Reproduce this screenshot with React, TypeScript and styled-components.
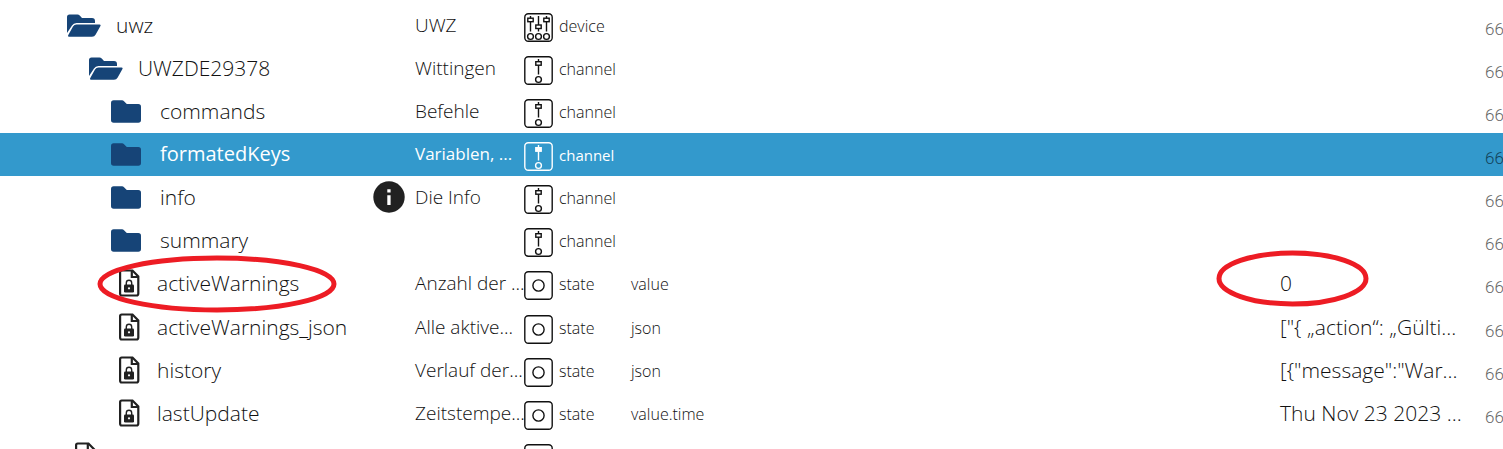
import React from "react";
import styled, { createGlobalStyle, css } from "styled-components";

const Global = createGlobalStyle`
  *, *::before, *::after { box-sizing: border-box; }
  body {
    margin: 0;
    background: #fff;
    color: #111;
    font-family: "Open Sans", "Noto Sans", sans-serif;
    font-weight: 300;
  }
`;

const Page = styled.main`
  height: 100vh;
  overflow: hidden;
  padding-top: 4px;
`;

const Table = styled.table`
  width: 100%;
  table-layout: fixed;
  border-collapse: separate;
  border-spacing: 0;
`;

const Col = styled.col<{ $width?: number }>`
  ${({ $width }) => $width && css`width: ${$width}px;`}
`;

const Cell = styled.td`
  position: relative;
  padding: 0;
  height: 43px;
  vertical-align: middle;
  white-space: nowrap;
  line-height: 28px;
`;

const Group = styled.tbody<{ $divided?: boolean }>`
  ${({ $divided }) =>
    $divided &&
    css`
      tr:first-child ${Cell} {
        height: 44px;
        border-bottom: 1px solid transparent;
      }
    `}
`;

const NameBox = styled.div<{ $level: number }>`
  display: flex;
  align-items: center;
  height: 43px;
  padding-left: ${({ $level }) => 67 + $level * 22}px;
  padding-right: 10px;
  padding-bottom: 1px;
  font-size: 21px;
`;

const IconSlot = styled.span<{ $file?: boolean }>`
  display: flex;
  flex: none;
  width: ${({ $file }) => ($file ? 46 : 49)}px;
  padding-left: ${({ $file }) => ($file ? 8 : 0)}px;
  color: ${({ $file }) => ($file ? "#212121" : "#164477")};
`;

const InfoMark = styled.span`
  display: flex;
  margin-left: auto;
`;

const Label = styled.div`
  padding-bottom: 1px;
  font-size: 19px;
`;

const TypeBox = styled.div`
  display: flex;
  align-items: center;
  gap: 6px;
  height: 43px;
  font-size: 16px;

  svg {
    flex: none;
    margin-top: 4px;
  }
`;

const Role = styled.div`
  font-size: 16px;
`;

const Value = styled.div`
  padding-bottom: 1px;
  font-size: 21px;
`;

const Row = styled.tr<{ $selected?: boolean }>`
  height: 43px;
  ${({ $selected }) =>
    $selected &&
    css`
      background: #3399cc;
      color: #fff;
      font-weight: 500;

      ${NameBox} { font-size: 20px; }
      ${Label} { font-size: 17px; }
      ${TypeBox} { font-size: 15px; }
    `}
`;

const Rights = styled.div<{ $selected?: boolean }>`
  overflow: hidden;
  padding-top: 7px;
  color: ${({ $selected }) => ($selected ? "#12425a" : "#666")};
  font-family: Roboto, sans-serif;
  font-size: 17px;
  font-weight: 300;
`;

const Ring = styled.svg<{ $left: number; $top: number }>`
  position: absolute;
  left: ${({ $left }) => $left}px;
  top: ${({ $top }) => $top}px;
  z-index: 1;
  pointer-events: none;
`;

const Marker = ({ left, top, width, height }: { left: number; top: number; width: number; height: number }) => (
  <Ring $left={left} $top={top} width={width} height={height} aria-hidden="true">
    <ellipse
      cx={width / 2}
      cy={height / 2}
      rx={width / 2 - 3}
      ry={height / 2 - 3}
      fill="none"
      stroke="#ed1c24"
      strokeWidth="5"
    />
  </Ring>
);

const FolderOpen = () => (
  <svg width="34" height="23" viewBox="0 0 34 23" fill="currentColor" aria-hidden="true">
    <path d="M0 19V3Q0 .5 2.500 .5H10.500Q11.800 .5 12.700 1.400L15 4H25Q28 4 28 7V9H9.500Q6.500 9 5 11.500Z" />
    <path d="M9.500 10.500H32.500Q34.200 10.500 33.300 12.200L28.700 20.500Q27.500 22.700 25 22.700H2Q.5 22.700 1.300 21L6 12.500Q7.200 10.500 9.500 10.500Z" />
  </svg>
);

const FolderClosed = () => (
  <svg width="30" height="23" viewBox="0 0 30 23" fill="currentColor" aria-hidden="true">
    <path d="M0 3Q0 .3 2.700 .3H11Q12.200 .3 13 1.200L15.800 4H27.300Q30 4 30 6.700V20Q30 22.700 27.300 22.700H2.700Q0 22.700 0 20Z" />
  </svg>
);

const FileLock = () => (
  <svg width="21" height="28" viewBox="0 0 21 28" fill="none" stroke="currentColor" aria-hidden="true">
    <path d="M2.700 1.500H13.500L19.300 7.500V24.500Q19.300 26.500 17.500 26.500H2.700Q1.100 26.500 1.100 24.500V3Q1.100 1.500 2.700 1.500Z" strokeWidth="2.200" />
    <path d="M12.800 2V8H19.300" strokeWidth="2.200" />
    <path d="M7.300 16V14Q7.300 11.300 10 11.300T12.700 14V16" strokeWidth="1.400" />
    <rect x="5" y="15.500" width="10" height="8" rx="1.300" fill="currentColor" stroke="none" />
    <circle cx="10" cy="19.300" r="1.100" fill="#fff" stroke="none" />
  </svg>
);

const InfoIcon = () => (
  <svg width="32" height="32" viewBox="0 0 32 32" role="img" aria-label="Info">
    <circle cx="16" cy="16" r="15.700" fill="#212121" />
    <path d="M14.300 8.300h3.300v3.200h-3.300zM14.300 14.200h3.300v9.800h-3.300z" fill="#fff" />
  </svg>
);

const Frame = ({ children }: { children: React.ReactNode }) => (
  <svg width="29" height="29" viewBox="0 0 29 29" fill="none" stroke="currentColor" strokeWidth="1.400" aria-hidden="true">
    <rect x=".8" y=".8" width="27.400" height="27.400" rx="3.500" />
    {children}
  </svg>
);

const Slider = ({ x, knob, filled }: { x: number; knob: number; filled?: boolean }) => (
  <>
    <path d={`M${x} 3V${knob}M${x} ${knob + 3.5}V18.500`} />
    <rect x={x - 2.7} y={knob} width="5.400" height="3.500" fill={filled ? "currentColor" : "none"} />
    <circle cx={x} cy="23.500" r="2.900" />
  </>
);

type Kind = "device" | "channel" | "state";

const KindIcon = ({ kind, filled }: { kind: Kind; filled?: boolean }) => (
  <Frame>
    {kind === "device" && (
      <>
        <Slider x={6.5} knob={5.2} />
        <Slider x={14.5} knob={12} />
        <Slider x={22.5} knob={5.2} />
      </>
    )}
    {kind === "channel" && <Slider x={14.5} knob={5.7} filled={filled} />}
    {kind === "state" && <circle cx="14.500" cy="14.500" r="5.600" />}
  </Frame>
);

type Item = {
  id: string;
  level: number;
  icon: "open" | "closed" | "file";
  label?: string;
  kind: Kind;
  role?: string;
  value?: string;
  info?: boolean;
  selected?: boolean;
  marked?: boolean;
};

const folders: Item[] = [
  { id: "uwz", level: 0, icon: "open", label: "UWZ", kind: "device" },
  { id: "UWZDE29378", level: 1, icon: "open", label: "Wittingen", kind: "channel" },
  { id: "commands", level: 2, icon: "closed", label: "Befehle", kind: "channel" },
  { id: "formatedKeys", level: 2, icon: "closed", label: "Variablen, ...", kind: "channel", selected: true },
  { id: "info", level: 2, icon: "closed", label: "Die Info", kind: "channel", info: true },
  { id: "summary", level: 2, icon: "closed", kind: "channel" },
];

const states: Item[] = [
  { id: "activeWarnings", level: 2, icon: "file", label: "Anzahl der ...", kind: "state", role: "value", value: "0", marked: true },
  { id: "activeWarnings_json", level: 2, icon: "file", label: "Alle aktive...", kind: "state", role: "json", value: '["{ „action“: „Gülti...' },
  { id: "history", level: 2, icon: "file", label: "Verlauf der...", kind: "state", role: "json", value: '[{"message":"War...' },
  { id: "lastUpdate", level: 2, icon: "file", label: "Zeitstempe...", kind: "state", role: "value.time", value: "Thu Nov 23 2023 ..." },
  { id: "", level: 0, icon: "file", kind: "state" },
];

const TreeRow = ({ item }: { item: Item }) => (
  <Row $selected={item.selected} aria-selected={item.selected}>
    <Cell>
      <NameBox $level={item.level}>
        <IconSlot $file={item.icon === "file"}>
          {item.icon === "open" && <FolderOpen />}
          {item.icon === "closed" && <FolderClosed />}
          {item.icon === "file" && <FileLock />}
        </IconSlot>
        {item.id}
        {item.info && (
          <InfoMark>
            <InfoIcon />
          </InfoMark>
        )}
      </NameBox>
      {item.marked && <Marker left={97} top={-7} width={240} height={58} />}
    </Cell>
    <Cell><Label>{item.label}</Label></Cell>
    <Cell>
      <TypeBox>
        <KindIcon kind={item.kind} filled={item.selected} />
        {item.id && item.kind}
      </TypeBox>
    </Cell>
    <Cell><Role>{item.role}</Role></Cell>
    <Cell>
      <Value>{item.value}</Value>
      {item.marked && <Marker left={-64} top={-12} width={153} height={57} />}
    </Cell>
    <Cell>{item.id && <Rights $selected={item.selected}>66</Rights>}</Cell>
  </Row>
);

export default function App() {
  return (
    <>
      <Global />
      <Page>
        <Table aria-label="Objects">
          <colgroup>
            <Col $width={415} />
            <Col $width={109} />
            <Col $width={107} />
            <Col />
            <Col $width={205} />
            <Col $width={18} />
          </colgroup>
          <Group>{folders.map((item) => <TreeRow key={item.id} item={item} />)}</Group>
          <Group $divided>{states.map((item) => <TreeRow key={item.id} item={item} />)}</Group>
        </Table>
      </Page>
    </>
  );
}
